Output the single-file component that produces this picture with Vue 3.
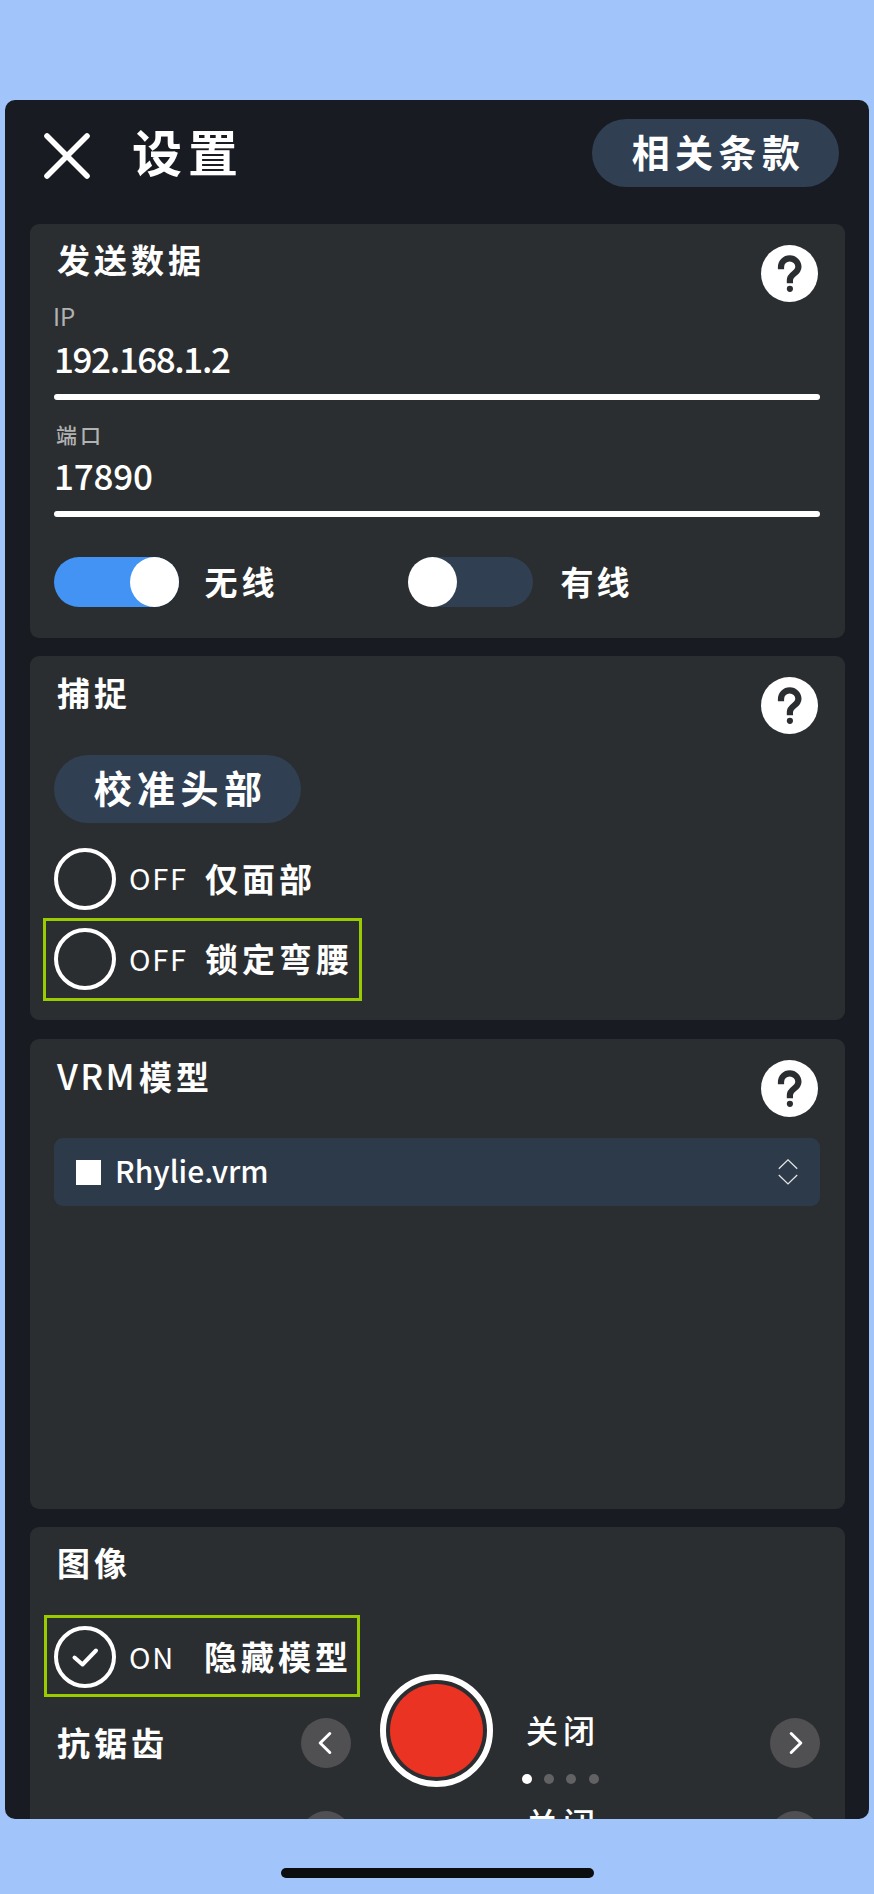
<script setup>
import { ref } from 'vue'

const fields = ref([
  { label: 'IP', value: '192.168.1.2', kind: 'ip' },
  { label: '端口', value: '17890', kind: 'port' },
])
const captureOptions = ref([
  { state: 'OFF', label: '仅面部', marked: false },
  { state: 'OFF', label: '锁定弯腰', marked: true },
])
const steppers = ref([
  { label: '抗锯齿', value: '关闭', count: 4, active: 0 },
  { label: '', value: '关闭', count: 4, active: 0 },
])
</script>

<template>
  <div class="screen">
    <main class="panel">
      <header class="topbar">
        <svg class="close" viewBox="0 0 46 46"><path d="M3 3 L43 43 M43 3 L3 43" /></svg>
        <h1>设置</h1>
        <button class="pill">相关条款</button>
      </header>

      <section class="card send">
        <div class="head">
          <h2>发送数据</h2>
          <svg class="help" viewBox="0 0 57 57">
            <circle class="disc" cx="28.5" cy="28.5" r="28.5" />
            <path class="hook" d="M20 24.3 V22 A8.7 8.7 0 0 1 37.4 22 C37.4 28.6 28.9 28.6 28.9 35 V38.3" />
            <circle class="dot" cx="28.9" cy="43.8" r="3.1" />
          </svg>
        </div>
        <div v-for="f in fields" :key="f.label" class="field" :class="f.kind">
          <div class="label">{{ f.label }}</div>
          <div class="value">{{ f.value }}</div>
          <div class="rule"></div>
        </div>
        <div class="toggles">
          <div class="toggle on"><i></i></div>
          <span class="txt first">无线</span>
          <div class="toggle"><i></i></div>
          <span class="txt second">有线</span>
        </div>
      </section>

      <section class="card capture">
        <div class="head">
          <h2>捕捉</h2>
          <svg class="help" viewBox="0 0 57 57">
            <circle class="disc" cx="28.5" cy="28.5" r="28.5" />
            <path class="hook" d="M20 24.3 V22 A8.7 8.7 0 0 1 37.4 22 C37.4 28.6 28.9 28.6 28.9 35 V38.3" />
            <circle class="dot" cx="28.9" cy="43.8" r="3.1" />
          </svg>
        </div>
        <button class="pill calibrate">校准头部</button>
        <div class="checks">
          <div v-for="o in captureOptions" :key="o.label" class="check" :class="{ marked: o.marked }">
            <span class="ring"></span>
            <span class="state">{{ o.state }}</span>
            <span class="txt">{{ o.label }}</span>
          </div>
        </div>
      </section>

      <section class="card model">
        <div class="head">
          <h2><span class="latin">VRM</span>模型</h2>
          <svg class="help" viewBox="0 0 57 57">
            <circle class="disc" cx="28.5" cy="28.5" r="28.5" />
            <path class="hook" d="M20 24.3 V22 A8.7 8.7 0 0 1 37.4 22 C37.4 28.6 28.9 28.6 28.9 35 V38.3" />
            <circle class="dot" cx="28.9" cy="43.8" r="3.1" />
          </svg>
        </div>
        <div class="select">
          <span class="square"></span>
          <span class="file">Rhylie.vrm</span>
          <svg class="updown" viewBox="0 0 20 26"><path d="M0.8 9.8 L10 0.9 L19.2 9.8 M0.8 16 L10 24.9 L19.2 16" /></svg>
        </div>
      </section>

      <section class="card image">
        <div class="head"><h2>图像</h2></div>
        <div class="check marked narrow">
          <span class="ring">
            <svg viewBox="0 0 62 62"><path d="M20.5 31.5 L28.5 38.5 L42 24.5" /></svg>
          </span>
          <span class="state">ON</span>
          <span class="txt">隐藏模型</span>
        </div>
        <div v-for="(s, i) in steppers" :key="i" class="stepper">
          <span class="txt name">{{ s.label }}</span>
          <button class="arrow"><svg viewBox="0 0 50 50"><path d="M28.8 15.5 L19.2 25 L28.8 34.5" /></svg></button>
          <div class="choice">
            <span class="txt">{{ s.value }}</span>
            <div class="dots"><i v-for="n in s.count" :key="n" :class="{ active: n - 1 === s.active }"></i></div>
          </div>
          <button class="arrow"><svg viewBox="0 0 50 50"><path d="M21.2 15.5 L30.8 25 L21.2 34.5" /></svg></button>
        </div>
      </section>
    </main>
    <div class="record"><i></i></div>
    <div class="home"></div>
  </div>
</template>

<style>
body { margin: 0; background: #a1c5fa; }
</style>

<style scoped>
.screen {
  position: relative;
  width: 874px;
  height: 1894px;
  box-sizing: border-box;
  padding-top: 100px;
  overflow: hidden;
  background: #a1c5fa;
  color: #fff;
  font-family: "Noto Sans CJK SC", "Noto Sans", sans-serif;
  font-weight: 700;
  white-space: nowrap;
}
.panel {
  width: 864px;
  height: 1719px;
  box-sizing: border-box;
  margin-left: 5px;
  padding: 0 24px 0 25px;
  border-radius: 10px;
  background: #181b22;
  overflow: hidden;
}
.topbar { display: flex; height: 124px; align-items: flex-start; }
.close { width: 46px; height: 46px; margin: 33px 0 0 14px; flex: none; }
.close path { stroke: #fff; stroke-width: 5.6; stroke-linecap: round; fill: none; }
h1 { margin: 15px 0 0 42px; font-size: 50px; line-height: 70px; letter-spacing: 6px; font-weight: 700; }
button { border: 0; padding: 0; margin: 0; color: inherit; font: inherit; }
.pill {
  width: 247px;
  height: 68px;
  border-radius: 34px;
  background: #303f52;
  font-size: 38px;
  line-height: 62px;
  padding-bottom: 4px;
  letter-spacing: 5.4px;
  text-indent: 6px;
}
.topbar .pill { margin: 19px 6px 0 auto; }
.card {
  box-sizing: border-box;
  width: 815px;
  margin-bottom: 18px;
  padding: 15px 25px 0 24px;
  border-radius: 9px;
  background: #2b2e30;
}
.send { height: 414px; }
.capture { height: 364px; margin-bottom: 19px; }
.model { height: 470px; }
.image { height: 360px; }
.head { display: flex; justify-content: space-between; height: 62px; }
h2 { margin: 0 0 0 3px; font-size: 33px; line-height: 40px; letter-spacing: 4px; font-weight: 700; }
.capture h2, .model h2 { margin-top: 1px; }
.latin { font-size: 35px; letter-spacing: 2.4px; font-weight: 500; margin-right: 2px; }
.help { width: 57px; height: 57px; margin: 6px 2px 0 0; flex: none; }
.disc { fill: #fff; }
.hook { fill: none; stroke: #2b2e30; stroke-width: 6.2; }
.dot { fill: #2b2e30; }

.field { height: 99px; margin-bottom: 19px; }
.field.port { height: 98px; margin-bottom: 40px; }
.label { height: 30px; line-height: 30px; font-size: 21px; letter-spacing: 3px; color: #b1b2b3; font-weight: 500; margin-left: 2px; }
.ip .label { font-size: 24px; letter-spacing: 0; font-weight: 400; margin-left: -1px; }
.value { height: 44px; margin-top: 5px; line-height: 44px; font-size: 35px; font-weight: 500; letter-spacing: -1.4px; margin-left: 0; }
.port .value { margin-top: 4px; letter-spacing: -0.2px; }
.rule { height: 6px; margin-top: 14px; border-radius: 3px; background: #fff; }

.toggles { display: flex; align-items: center; height: 50px; }
.toggle { width: 125px; height: 50px; border-radius: 25px; background: #303f52; flex: none; display: flex; }
.toggle i { width: 49px; height: 50px; border-radius: 50%; background: #fff; }
.toggle.on { background: #4393f4; justify-content: flex-end; }
.txt { font-size: 33px; line-height: 40px; letter-spacing: 4px; }
.toggles .txt { margin-top: -2px; }
.txt.first { width: 203px; margin-left: 25.5px; }
.txt.second { margin-left: 28px; letter-spacing: 3px; }

.calibrate { display: block; margin-top: 22px; }
.checks { display: flex; flex-direction: column; gap: 18.5px; margin-top: 24.5px; }
.check { position: relative; display: flex; align-items: center; height: 62px; }
.ring { box-sizing: border-box; width: 62px; height: 62px; border: 4.5px solid #fff; border-radius: 50%; flex: none; }
.ring svg { display: block; width: 62px; height: 62px; margin: -4px; }
.ring path { fill: none; stroke: #fff; stroke-width: 4; stroke-linecap: round; stroke-linejoin: round; }
.state { width: 76px; margin: -3px 0 0 13px; font-size: 29px; line-height: 40px; letter-spacing: 1.7px; font-weight: 400; }
.check .txt { margin-top: -2px; }
.marked::after {
  content: "";
  position: absolute;
  box-sizing: border-box;
  left: -11px;
  top: -10px;
  width: 319px;
  height: 83px;
  border: 3px solid #99cc00;
}
.marked.narrow::after { left: -10px; top: -11px; width: 316px; height: 82px; }
.narrow { margin-top: 22px; }
.narrow .txt { margin-left: -1px; }

.select { display: flex; align-items: center; height: 68px; margin-top: 22px; border-radius: 9px; background: #2d3a4a; padding: 0 22px; }
.square { width: 25px; height: 25px; background: #fff; flex: none; }
.file { margin-left: 14px; font-size: 30px; line-height: 40px; font-weight: 500; letter-spacing: 0; margin-top: -4px; }
.updown { width: 20px; height: 26px; margin-left: auto; }
.updown path { fill: none; stroke: #e4e4e4; stroke-width: 1.3; }

.stepper { display: flex; height: 93px; align-items: flex-start; margin-top: 0; }
.narrow + .stepper { margin-top: 30px; }
.stepper .name { width: 244px; margin: 4px 0 0 3px; }
.arrow { width: 50px; height: 50px; border-radius: 50%; background: #505052; flex: none; }
.arrow svg { display: block; width: 50px; height: 50px; }
.arrow path { fill: none; stroke: #fff; stroke-width: 3; stroke-linecap: round; stroke-linejoin: round; }
.choice { width: 419px; box-sizing: border-box; padding-left: 171px; margin-top: -9px; }
.choice .txt { display: block; font-size: 32px; letter-spacing: 5px; padding-left: 4px; font-weight: 500; }
.dots { display: flex; gap: 12.2px; margin-top: 25px; }
.dots i { width: 10px; height: 10px; border-radius: 50%; background: #626264; }
.dots i.active { background: #fff; }

.record {
  position: absolute;
  left: 380px;
  top: 1674px;
  width: 113px;
  height: 113px;
  box-sizing: border-box;
  border: 6.5px solid #fff;
  border-radius: 50%;
  background: #2b2e30;
  display: flex;
  align-items: center;
  justify-content: center;
}
.record i { width: 93px; height: 93px; border-radius: 50%; background: #eb3323; flex: none; }
.home { width: 313px; height: 10px; margin: 49px 0 0 281px; border-radius: 5px; background: #0c0d0e; }
</style>
